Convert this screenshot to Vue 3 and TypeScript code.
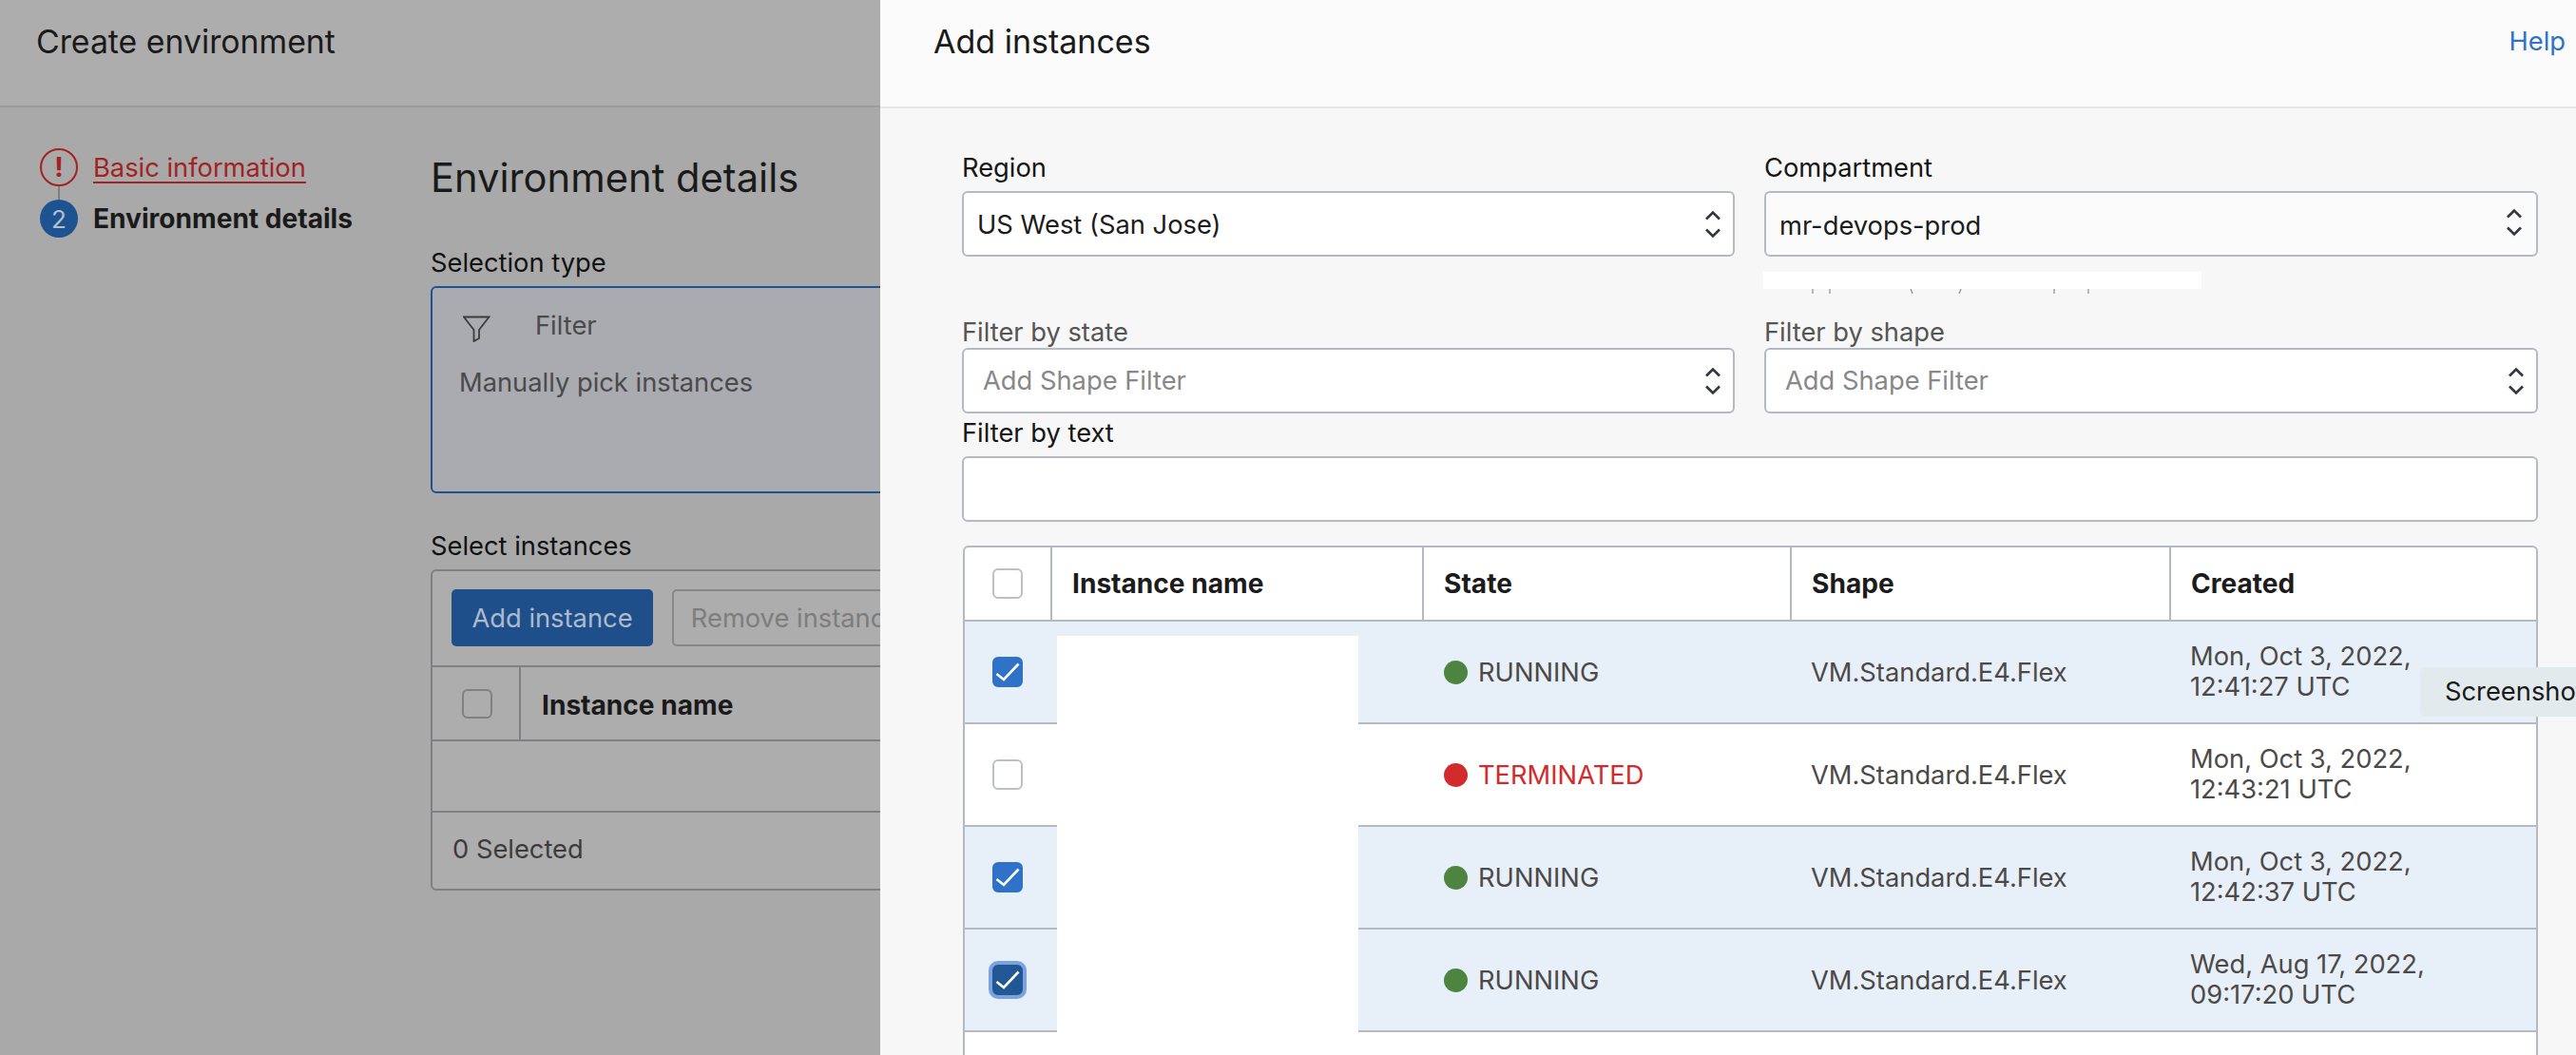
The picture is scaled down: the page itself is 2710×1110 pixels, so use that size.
<template>
  <div class="screen">
    <div class="page">
      <header class="page-head">Create environment</header>
      <div class="page-body">
        <ol class="steps">
          <li class="step">
            <span class="step-mark warn">!</span>
            <a class="step-link">Basic information</a>
          </li>
          <li class="step current">
            <span class="step-mark num">2</span>
            <span>Environment details</span>
          </li>
        </ol>
        <main class="details">
          <h2>Environment details</h2>
          <div class="bg-label">Selection type</div>
          <div class="type-card">
            <div class="type-title">
              <svg class="funnel" viewBox="0 0 29 28" fill="none" stroke="#3c3c3c" stroke-width="1.800">
                <path d="M1 1.500H27.500L17 15V24L11.500 27V15Z" />
              </svg>
              <span>Filter</span>
            </div>
            <p>Manually pick instances</p>
          </div>
          <div class="bg-label select-label">Select instances</div>
          <div class="bg-table">
            <div class="bg-toolbar">
              <button class="add-btn">Add instance</button>
              <button class="remove-btn">Remove instance</button>
            </div>
            <div class="bg-head">
              <div class="bg-check"><span class="bg-box"></span></div>
              <div class="bg-name">Instance name</div>
            </div>
            <div class="bg-empty"></div>
            <div class="bg-foot">0 Selected</div>
          </div>
        </main>
      </div>
    </div>

    <aside class="panel">
      <header class="panel-head">
        <span class="panel-title">Add instances</span>
        <a class="help">Help</a>
      </header>
      <div class="panel-body">
        <div class="fields">
          <div class="field">
            <label>Region</label>
            <div class="select">
              <span class="value">US West (San Jose)</span>
              <svg class="chev" viewBox="0 0 20 32" fill="none" stroke="#33373b" stroke-width="2.600">
                <path d="M3 10.500L10 3.500L17 10.500M3 21.500L10 28.500L17 21.500" />
              </svg>
            </div>
          </div>
          <div class="field">
            <label>Compartment</label>
            <div class="select compartment">
              <span class="value">mr-devops-prod</span>
              <svg class="chev" viewBox="0 0 20 32" fill="none" stroke="#33373b" stroke-width="2.600">
                <path d="M3 10.500L10 3.500L17 10.500M3 21.500L10 28.500L17 21.500" />
              </svg>
            </div>
            <div class="hint">
              <div class="hint-mask"></div>
              <svg class="hint-stubs" width="461" height="5" viewBox="0 0 461 5" fill="none" stroke="#8c8c8c" stroke-width="1.200">
                <path d="M52 0V5M70 0V5M155 0L157 5M208 0L206 5M306 0V5M342 0V5" />
              </svg>
            </div>
          </div>
          <div class="field muted">
            <label>Filter by state</label>
            <div class="select">
              <span class="placeholder">Add Shape Filter</span>
              <svg class="chev" viewBox="0 0 20 32" fill="none" stroke="#33373b" stroke-width="2.600">
                <path d="M3 10.500L10 3.500L17 10.500M3 21.500L10 28.500L17 21.500" />
              </svg>
            </div>
          </div>
          <div class="field muted">
            <label>Filter by shape</label>
            <div class="select">
              <span class="placeholder">Add Shape Filter</span>
              <svg class="chev" viewBox="0 0 20 32" fill="none" stroke="#33373b" stroke-width="2.600">
                <path d="M3 10.500L10 3.500L17 10.500M3 21.500L10 28.500L17 21.500" />
              </svg>
            </div>
          </div>
        </div>
        <div class="field text-field">
          <label>Filter by text</label>
          <div class="select"></div>
        </div>

        <div class="table">
          <div class="row head">
            <div class="cell check"><span class="box"></span></div>
            <div class="cell">Instance name</div>
            <div class="cell">State</div>
            <div class="cell">Shape</div>
            <div class="cell">Created</div>
          </div>
          <div v-for="row in rows" :key="row.created[1]" class="row" :class="{ selected: row.checked }">
            <div class="cell check">
              <span class="box" :class="{ on: row.checked, focused: row.focused }">
                <svg v-if="row.checked" viewBox="0 0 32 32" fill="none" stroke="#fff" stroke-width="2.600">
                  <path d="M4.500 18L12 24L27.500 7.500" />
                </svg>
              </span>
            </div>
            <div class="cell"></div>
            <div class="cell state" :class="row.state === 'RUNNING' ? 'ok' : 'bad'">
              <span class="dot"></span>{{ row.state }}
            </div>
            <div class="cell">VM.Standard.E4.Flex</div>
            <div class="cell created">
              <span>{{ row.created[0] }}</span>
              <span>{{ row.created[1] }}</span>
            </div>
          </div>
          <div class="name-mask"></div>
        </div>
      </div>
      <div class="tooltip">Screenshot</div>
    </aside>
  </div>
</template>

<script setup lang="ts">
interface InstanceRow {
  checked: boolean
  focused?: boolean
  state: string
  created: [string, string]
}

const rows: InstanceRow[] = [
  { checked: true, state: 'RUNNING', created: ['Mon, Oct 3, 2022,', '12:41:27 UTC'] },
  { checked: false, state: 'TERMINATED', created: ['Mon, Oct 3, 2022,', '12:43:21 UTC'] },
  { checked: true, state: 'RUNNING', created: ['Mon, Oct 3, 2022,', '12:42:37 UTC'] },
  { checked: true, focused: true, state: 'RUNNING', created: ['Wed, Aug 17, 2022,', '09:17:20 UTC'] }
]
</script>

<style>
html,
body {
  margin: 0;
  background: #a9a9a9;
}
</style>

<style scoped>
.screen {
  position: relative;
  width: 2710px;
  height: 1110px;
  overflow: hidden;
  font-family: Inter, "Liberation Sans", sans-serif;
  font-size: 27.300px;
  color: #1a1a1a;
  background: #a9a9a9;
}

/* dimmed page behind the panel */
.page-head {
  height: 113px;
  box-sizing: border-box;
  padding: 24px 0 0 38px;
  font-size: 33.800px;
  line-height: 40px;
  background: #adadad;
  border-bottom: 2px solid #9c9c9c;
}
.page-body {
  display: flex;
}
.steps {
  list-style: none;
  margin: 0;
  padding: 43px 0 0 42px;
  width: 453px;
  box-sizing: border-box;
}
.step {
  position: relative;
  display: flex;
  align-items: center;
  gap: 16px;
  height: 40px;
  margin-bottom: 14px;
  color: #a32222;
}
.step.current {
  color: #1a1a1a;
  font-size: 28.100px;
  font-weight: 700;
}
.step + .step::before {
  content: "";
  position: absolute;
  left: 19px;
  top: -14px;
  width: 2px;
  height: 14px;
  background: #7f7f7f;
}
.step-mark {
  flex: none;
  width: 40px;
  height: 40px;
  box-sizing: border-box;
  border-radius: 50%;
  display: flex;
  align-items: center;
  justify-content: center;
}
.step-mark.warn {
  border: 2px solid #a32222;
  font-weight: 700;
  font-size: 28px;
}
.step-mark.num {
  background: #1e5392;
  color: #b5c0cf;
  font-weight: 400;
  font-size: 26px;
}
.step-link {
  text-decoration: underline;
  text-underline-offset: 5px;
  text-decoration-thickness: 2px;
}
.details {
  flex: none;
  width: 1000px;
}
.details h2 {
  margin: 0;
  padding-top: 50px;
  font-size: 41.700px;
  font-weight: 400;
  line-height: 48px;
}
.bg-label {
  margin-top: 50px;
  line-height: 32px;
  color: #111;
}
.type-card {
  margin-top: 8px;
  box-sizing: border-box;
  width: 1000px;
  height: 218px;
  padding: 21px 28px;
  background: #a9abb0;
  border: 2px solid #1f5190;
  border-radius: 6px;
  color: #4a4a4a;
}
.type-title {
  display: flex;
  align-items: center;
  gap: 47px;
  padding-left: 4px;
  height: 36px;
}
.funnel {
  width: 29px;
  height: 28px;
  margin-top: 8px;
}
.type-card p {
  margin: 25px 0 0 0;
  line-height: 36px;
}
.select-label {
  margin-top: 40px;
}
.bg-table {
  margin-top: 8px;
  box-sizing: border-box;
  width: 1000px;
  height: 338px;
  background: #adadad;
  border: 2px solid #7e8083;
  border-radius: 6px;
}
.bg-toolbar {
  display: flex;
  gap: 20px;
  height: 101px;
  box-sizing: border-box;
  padding: 19px 20px 0;
  border-bottom: 2px solid #7e8083;
}
.bg-toolbar button {
  height: 60px;
  box-sizing: border-box;
  border-radius: 5px;
  font: inherit;
  padding: 0;
}
.add-btn {
  width: 212px;
  background: #1e4f8b;
  color: #aebacb;
  border: none;
}
.remove-btn {
  width: 260px;
  background: transparent;
  color: #7d7d7d;
  border: 2px solid #858789;
}
.bg-head {
  display: flex;
  height: 78px;
  box-sizing: border-box;
  border-bottom: 2px solid #7e8083;
  font-size: 28.100px;
  font-weight: 700;
}
.bg-check {
  width: 93px;
  display: flex;
  align-items: center;
  justify-content: center;
  border-right: 2px solid #7e8083;
  box-sizing: border-box;
  padding-left: 2px;
}
.bg-box {
  width: 32px;
  height: 31px;
  box-sizing: border-box;
  border: 2px solid #7e8083;
  border-radius: 6px;
}
.bg-name {
  padding-left: 22px;
  line-height: 80px;
}
.bg-empty {
  height: 75px;
  box-sizing: border-box;
  border-bottom: 2px solid #7e8083;
}
.bg-foot {
  padding: 21px 21px;
  line-height: 36px;
  color: #3c3c3c;
}

/* slide-in panel */
.panel {
  position: absolute;
  top: 0;
  left: 926px;
  right: 0;
  bottom: 0;
  background: #f7f7f7;
}
.panel-head {
  height: 114px;
  box-sizing: border-box;
  display: flex;
  justify-content: space-between;
  padding: 24px 11px 0 56px;
  background: #fbfbfb;
  border-bottom: 2px solid #e6e6e6;
  line-height: 40px;
}
.panel-title {
  font-size: 34px;
}
.help {
  color: #2f72c8;
  line-height: 40px;
}
.panel-body {
  padding: 47px 0 0 86px;
}
.fields {
  display: grid;
  grid-template-columns: 813px 814px;
  column-gap: 31px;
  row-gap: 64px;
}
.field {
  position: relative;
}
.field label {
  display: block;
  line-height: 32px;
  margin-bottom: 8px;
  color: #161616;
}
.field.muted label {
  margin-bottom: 0;
  color: #555;
}
.select {
  box-sizing: border-box;
  height: 69px;
  display: flex;
  align-items: center;
  justify-content: space-between;
  padding: 0 11px 0 14px;
  background: #fff;
  border: 2px solid #b5bac0;
  border-radius: 6px;
}
.select.compartment {
  background: #fbfbfb;
}
.value {
  padding-top: 2px;
  color: #1c1c1c;
}
.compartment .value {
  padding-top: 3px;
}
.placeholder {
  padding-left: 6px;
  color: #888;
}
.chev {
  width: 20px;
  height: 32px;
}
.compartment .chev {
  margin-top: -4px;
  margin-right: 2px;
}
.hint {
  position: absolute;
  left: -1px;
  top: 125px;
}
.hint-mask {
  width: 461px;
  height: 18px;
  background: #fff;
}
.hint-stubs {
  display: block;
}
.text-field {
  margin-top: 5px;
  width: 1658px;
}
.table {
  position: relative;
  margin-top: 25px;
  margin-left: 1px;
  width: 1657px;
  height: 800px;
  box-sizing: border-box;
  background: #fff;
  border: 2px solid #b5bac0;
  border-radius: 6px 6px 0 0;
  color: #4c4a48;
}
.row {
  display: grid;
  grid-template-columns: 92px 391px 387px 399px 1fr;
  height: 108px;
  box-sizing: border-box;
  border-bottom: 2px solid #b5bac0;
}
.row.head {
  height: 78px;
  color: #1c1c1c;
  font-size: 28.100px;
  font-weight: 700;
}
.row.head .cell + .cell,
.row.head .check {
  border-right: 2px solid #b5bac0;
}
.row.head .cell:last-child {
  border-right: none;
}
.row.head .cell:not(.check) {
  padding-left: 21px;
}
.row.selected {
  background: #e7eff8;
}
.cell {
  display: flex;
  align-items: center;
  padding-left: 20px;
  min-width: 0;
}
.cell.check {
  padding-left: 29px;
}
.box {
  width: 32px;
  height: 32px;
  box-sizing: border-box;
  border: 2px solid #bcc0c5;
  border-radius: 6px;
  background: #fff;
}
.box svg {
  display: block;
  width: 32px;
  height: 32px;
  margin: -2px;
}
.box.on {
  background: #2f72c8;
  border-color: #2f72c8;
}
.box.focused {
  background: #225796;
  border-color: #225796;
  box-shadow: 0 0 0 4px #7ba3de;
}
.state {
  gap: 11px;
  padding-left: 21px;
}
.dot {
  width: 25px;
  height: 25px;
  border-radius: 50%;
}
.ok .dot {
  background: #4c8440;
}
.bad {
  color: #d32b2b;
}
.bad .dot {
  background: #d32b2b;
}
.created {
  flex-direction: column;
  align-items: flex-start;
  justify-content: center;
  line-height: 32px;
}
.name-mask {
  position: absolute;
  left: 97px;
  top: 93px;
  width: 317px;
  height: 700px;
  background: #fff;
}
.tooltip {
  position: absolute;
  left: 1620px;
  top: 702px;
  width: 300px;
  height: 52px;
  box-sizing: border-box;
  padding-left: 26px;
  line-height: 52px;
  background: #e3eaee;
  border-radius: 6px;
  color: #1a1a1a;
}
</style>
